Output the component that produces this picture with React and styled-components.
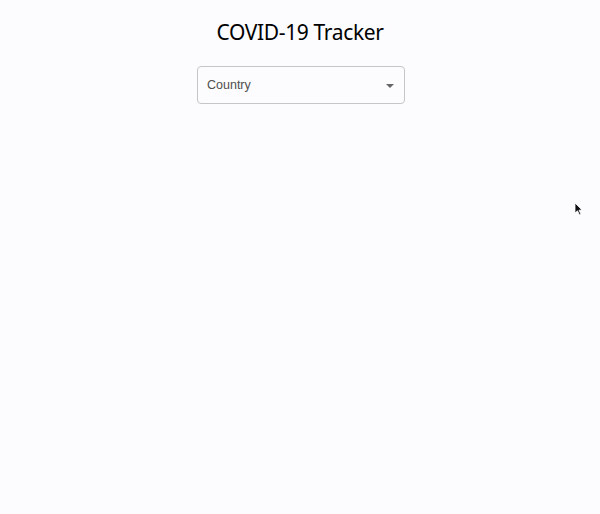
import React from 'react';
import styled, { createGlobalStyle } from 'styled-components';

const GlobalStyle = createGlobalStyle`
  html, body {
    margin: 0;
    padding: 0;
    background: #fcfbfd;
  }
  body {
    font-family: 'Noto Sans', 'Open Sans', sans-serif;
  }
`;

const Page = styled.div`
  position: relative;
  min-height: 514px;
  display: flex;
  flex-direction: column;
  align-items: center;
`;

const Title = styled.h1`
  margin: 17px 0 0;
  font-family: 'Noto Sans', sans-serif;
  font-size: 21px;
  font-weight: 400;
  letter-spacing: -0.35px;
  line-height: 30px;
  color: #000;
`;

const Select = styled.div`
  margin: 19px 0 0 2px;
  box-sizing: border-box;
  width: 208px;
  height: 38px;
  padding: 0 10px 0 9px;
  display: flex;
  align-items: center;
  justify-content: space-between;
  border: 1px solid #c6c5c8;
  border-radius: 4px;
  background: #fcfbfd;
  cursor: pointer;
`;

const Label = styled.span`
  font-family: 'Liberation Sans', Arial, sans-serif;
  font-size: 12.5px;
  color: #4f4f4f;
  margin-top: -1px;
`;

const Arrow = styled.svg`
  width: 8px;
  height: 4px;
  margin-top: 1px;
`;

const Pointer = styled.svg`
  position: absolute;
  left: 574px;
  top: 202px;
  width: 9px;
  height: 14px;
`;

export default function App() {
  return (
    <>
      <GlobalStyle />
      <Page>
        <Title>COVID-19 Tracker</Title>
        <Select>
          <Label>Country</Label>
          <Arrow viewBox="0 0 8 4">
            <path d="M0 0 L8 0 L4 4 Z" fill="#666" />
          </Arrow>
        </Select>
        <Pointer viewBox="0 0 9 14">
          <path d="M1 1 L1 11 L3.5 8.8 L5.5 13 L7 12.3 L5 8.2 L8 8 Z" fill="#111" stroke="#fff" strokeWidth="0.8" />
        </Pointer>
      </Page>
    </>
  );
}
